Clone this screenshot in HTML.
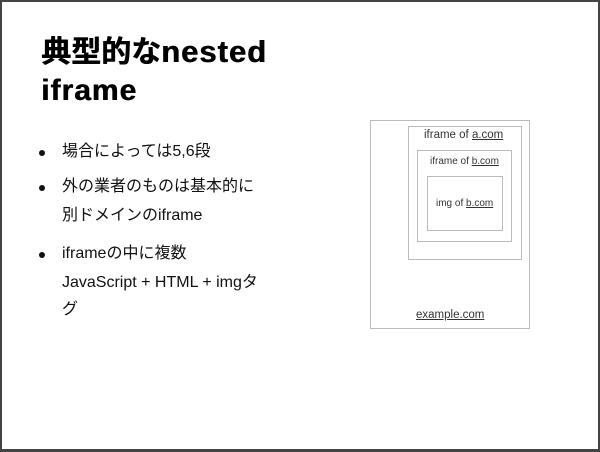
<!DOCTYPE html>
<html><head><meta charset="utf-8"><style>
html,body{margin:0;padding:0}
body{width:600px;height:451px;position:relative;overflow:hidden;background:#fff;font-family:"Liberation Sans","Noto Sans CJK JP",sans-serif}
.frame{position:absolute;left:0;top:0;width:596px;height:447px;border:2px solid #444;border-right-width:3px;border-bottom-width:3px;box-sizing:content-box}
.t{position:absolute;left:41px;font-weight:bold;font-size:30px;color:#000;white-space:nowrap;line-height:1;text-shadow:0.6px 0 0 #000}
.t .e{letter-spacing:1px}
.l{position:absolute;left:62px;font-size:16px;color:#111;white-space:nowrap;line-height:1}
.d{position:absolute;left:39px;width:6px;height:6px;border-radius:50%;background:#111}
.b{position:absolute;border:1px solid #bbb}
.s{position:absolute;font-size:11px;color:#333;white-space:nowrap;line-height:1}
u{text-decoration:underline}
</style></head><body>
<div class="frame"></div>
<div class="t" style="top:36px">典型的な<span class="e" style="font-size:31px">nested</span></div>
<div class="t" style="top:76px"><span class="e">iframe</span></div>
<div class="d" style="top:150px"></div>
<div class="l" style="top:144px">場合によっては5,6段</div>
<div class="d" style="top:185px"></div>
<div class="l" style="top:179px">外の業者のものは基本的に</div>
<div class="l" style="top:208px">別ドメインのiframe</div>
<div class="d" style="top:252px"></div>
<div class="l" style="top:246px">iframeの中に複数</div>
<div class="l" style="top:275px">JavaScript + HTML + imgタ</div>
<div class="l" style="top:302px">グ</div>
<div class="b" style="left:370px;top:120px;width:158px;height:207px"></div>
<div class="b" style="left:408px;top:126px;width:112px;height:132px"></div>
<div class="b" style="left:417px;top:150px;width:93px;height:90px"></div>
<div class="b" style="left:427px;top:176px;width:74px;height:53px"></div>
<div class="s" style="left:424px;top:130px;font-size:11.5px">iframe of <u>a.com</u></div>
<div class="s" style="left:430px;top:157px;font-size:10px">iframe of <u>b.com</u></div>
<div class="s" style="left:436px;top:199px;font-size:10px">img of <u>b.com</u></div>
<div class="s" style="left:416px;top:310px;font-size:11.5px"><u>example.com</u></div>
</body></html>
